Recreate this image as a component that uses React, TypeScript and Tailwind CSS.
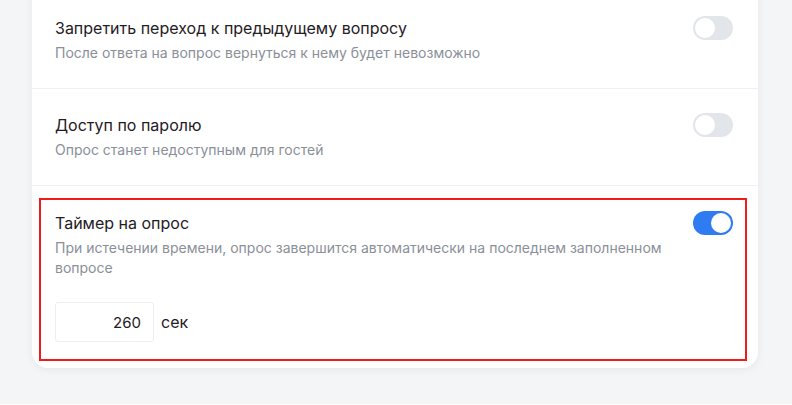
import { useState } from "react";

interface ToggleProps {
  checked: boolean;
  onChange: (v: boolean) => void;
}

function Toggle({ checked, onChange }: ToggleProps) {
  return (
    <button
      type="button"
      onClick={() => onChange(!checked)}
      className={`relative h-6 w-10 shrink-0 rounded-full transition-colors ${
        checked ? "bg-[#2f7cf2]" : "bg-[#e2e6eb]"
      }`}
    >
      <span
        className={`absolute top-[2px] h-5 w-5 rounded-full bg-white transition-all ${
          checked ? "left-[18px]" : "left-[2px] bg-[#f6f7f9]"
        }`}
      />
    </button>
  );
}

interface SettingRowProps {
  title: string;
  description: string;
  checked: boolean;
  onChange: (v: boolean) => void;
}

function SettingText({ title, description }: { title: string; description: string }) {
  return (
    <div className="flex-1 pr-3">
      <p className="text-[16px] leading-6 text-[#1f2023]">{title}</p>
      <p className="mt-[3px] text-[14px] leading-5 text-[#8a8f98]">{description}</p>
    </div>
  );
}

function SettingRow({ title, description, checked, onChange }: SettingRowProps) {
  return (
    <div className="flex items-start border-b border-[#eef0f3] pl-[23px] pr-[25px] pt-[24px] pb-[25px]">
      <SettingText title={title} description={description} />
      <Toggle checked={checked} onChange={onChange} />
    </div>
  );
}

export default function App() {
  const [noBack, setNoBack] = useState(false);
  const [password, setPassword] = useState(false);
  const [timer, setTimer] = useState(true);
  const [seconds, setSeconds] = useState("260");

  return (
    <div
      className="min-h-[405px] w-full bg-[#f3f5f7] px-8 pb-9"
      style={{ fontFamily: "Inter, 'Noto Sans', sans-serif" }}
    >
      <div className="-mt-2 w-[726px] rounded-b-2xl bg-white shadow-[0_2px_8px_rgba(20,30,50,0.06)]">
        <SettingRow
          title="Запретить переход к предыдущему вопросу"
          description="После ответа на вопрос вернуться к нему будет невозможно"
          checked={noBack}
          onChange={setNoBack}
        />
        <SettingRow
          title="Доступ по паролю"
          description="Опрос станет недоступным для гостей"
          checked={password}
          onChange={setPassword}
        />
        <div className="pl-[7px] pr-[11px] pt-[12px] pb-[7px]">
          <div className="border-2 border-[#ee1c1c] pl-[14px] pr-[12px] pt-[11px] pb-[17px]">
            <div className="flex items-start">
              <SettingText
                title="Таймер на опрос"
                description="При истечении времени, опрос завершится автоматически на последнем заполненном вопросе"
              />
              <Toggle checked={timer} onChange={setTimer} />
            </div>
            <div className="mt-6 flex items-center gap-[7px]">
              <input
                value={seconds}
                onChange={(e) => setSeconds(e.target.value)}
                className="h-10 w-[99px] rounded-[3px] border border-[#eceef1] px-3 text-right text-[15px] text-[#1f2023] outline-none"
              />
              <span className="text-[16px] text-[#1f2023]">сек</span>
            </div>
          </div>
        </div>
      </div>
    </div>
  );
}
